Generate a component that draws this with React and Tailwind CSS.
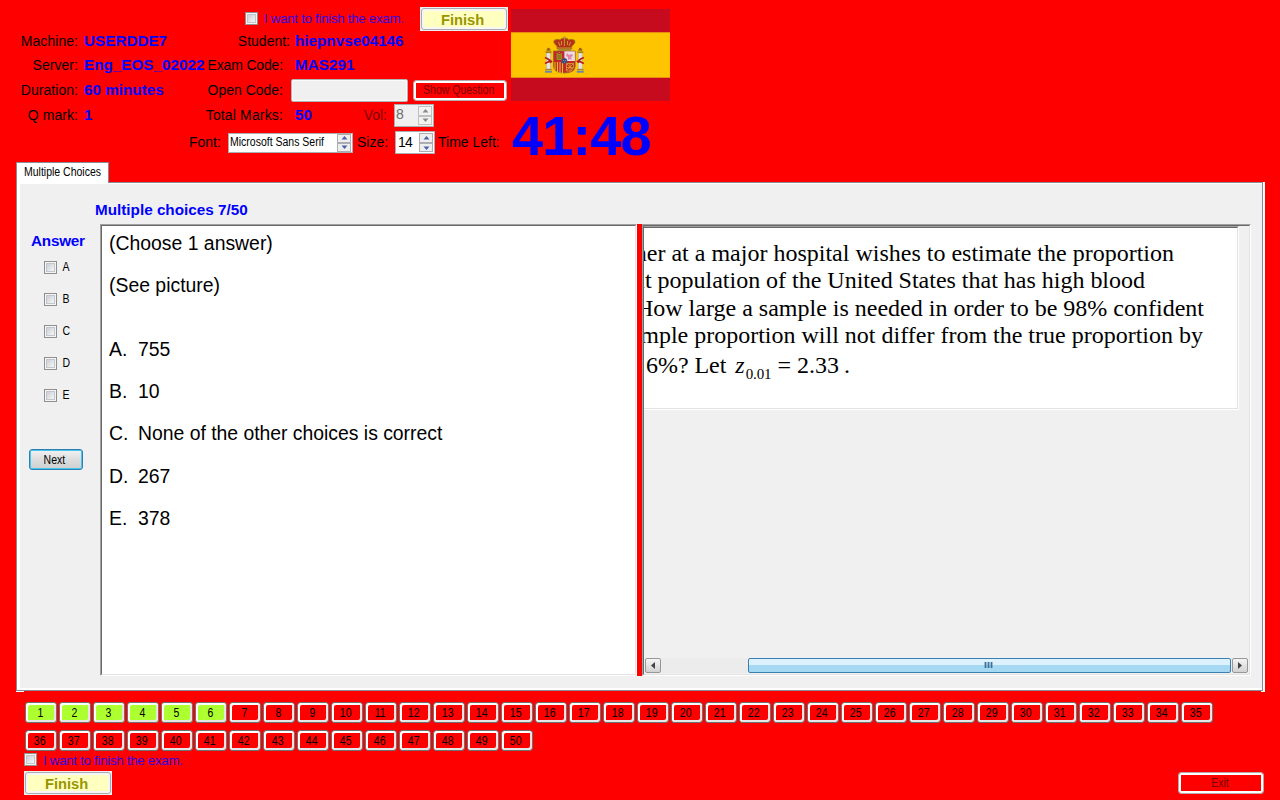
import React from "react";

const small = "inline-block whitespace-nowrap text-[12px] leading-[14px] scale-x-[.875]";
const wide = "inline-block origin-left whitespace-nowrap text-[14px] leading-4 font-bold text-[#0000ff] scale-x-[1.09]";

function CheckBox() {
  return (
    <span className="block h-[13px] w-[13px] shrink-0 border border-[#8e8f8f] bg-[#f4f4f4] p-px">
      <span className="block h-full w-full border border-[#c3c6cb] bg-linear-to-br from-[#cbcfd5] to-[#f6f6f6]" />
    </span>
  );
}

function FinishCheck() {
  return (
    <label className="flex items-center">
      <span className="pb-px"><CheckBox /></span>
      <span className="ml-[6px] whitespace-nowrap text-[13.33px] leading-4 tracking-[-0.3px] text-[#3000e0]">
        I want to finish the exam.
      </span>
    </label>
  );
}

function FinishButton() {
  return (
    <button className="h-6 w-[88px] shrink-0 bg-[#f0f0f0] p-px">
      <span className="flex h-full w-full items-center justify-center rounded-[3px] border border-[#a9acb0] bg-[#ffffc0] pr-[3px] shadow-[inset_0_0_0_2px_#f6f6f6]">
        <span className="inline-block scale-x-[1.05] pt-[2px] text-[14px] leading-4 font-bold text-[#989600]">Finish</span>
      </span>
    </button>
  );
}

function Spinner({ disabled, short }) {
  const fill = disabled ? "#8a8a8a" : "#4a62a8";
  const box = disabled
    ? "flex w-[14px] items-center justify-center border border-[#c0c0c0] bg-[#f2f2f2] "
    : "flex w-[14px] items-center justify-center border border-[#abadb3] bg-[#eeeeee] ";
  return (
    <span className="flex shrink-0 flex-col">
      <span className={box + (short ? "h-[9px]" : "h-[10px]")}>
        <svg width="7" height="4" viewBox="0 0 7 4"><path d="M3.5 0 6.5 3.5h-6z" fill={fill} /></svg>
      </span>
      <span className={box + "h-[9px]"}>
        <svg width="7" height="4" viewBox="0 0 7 4"><path d="M.5.5h6L3.5 4z" fill={fill} /></svg>
      </span>
    </span>
  );
}

function Flag() {
  return (
    <svg className="block" width="159" height="92" viewBox="0 0 159 92">
      <rect width="159" height="92" fill="#c60b1e" />
      <rect y="23" width="159" height="46" fill="#ffc400" />
      <path d="M0 23.5h159M0 68.5h159" stroke="#e88b10" />
      {/* crown */}
      <path d="M43 34q-1-3 2-3.5 3-.5 4 .5 1-2 4.400-2 3.400 0 4.400 2 1-1 4-.5 3 .5 2 3.500l-3 3.500v2.500H46v-2.500z" fill="#b8301c" stroke="#a47b10" strokeWidth=".9" />
      <path d="M53.4 27v10M52 28.500h3M47.500 33l1.500 4M59.500 33l-1.500 4M46 39h15M50.500 32v4M56.500 32v4" stroke="#c0992c" strokeWidth="1" fill="none" />
      <path d="M47 41h13" stroke="#7b6b4c" />
      {/* pillars */}
      {[37.5, 69.3].map((x) => (
        <g key={x}>
          <path d={`M${x - 2} 44h4v16h-4z`} fill="#e4e4e4" stroke="#aaa" strokeWidth=".5" />
          <path d={`M${x - 3} 43.2h6M${x - 2} 41h4`} stroke="#8f6d1d" strokeWidth="1.3" />
          <circle cx={x} cy="40" r="1.3" fill="#9a5b1a" />
          <path d={`M${x - 3.3} 60.5h6.6`} stroke="#a8843a" strokeWidth="1.2" />
          <path d={`M${x - 3.5} 62.7h7`} stroke="#6e88a8" strokeWidth="2" />
        </g>
      ))}
      <path d="M34 48.500l3 1.500 4 3M34 54.500l4-2 2 1M72.800 48.500l-3 1.500-4 3M72.800 54.500l-4-2-2 1" stroke="#b51f20" strokeWidth="1.700" fill="none" />
      {/* quartered shield */}
      <path d="M42.5 42h21.7v15q0 7-10.8 7t-10.9-7z" fill="#c1272d" stroke="#8a6a36" strokeWidth=".7" />
      <path d="M53.4 42.3h10.5V52H53.4z" fill="#eddde3" />
      <path d="M46 45.5h4.5v5H46zM45.3 44.5h1.5M47.5 43.7h1.5M50 44.5h1.2" fill="#8d7725" stroke="#a38b20" strokeWidth="1" />
      <path d="M56 44l2 2 3-1 1 2-2 1 1 3-2-1-2 1v-3l-2-1z" fill="#d987a7" />
      <path d="M44 53v8M46.5 53v10M49 53v11M51.5 53v11" stroke="#e8bd22" strokeWidth="1.1" />
      <path d="M55.5 54.5h7v4l-2.5 3.5h-4.5zM55.5 54.5l6 6M62.5 54.5l-7 7M59 54.5v8M55.5 58.5h7" stroke="#d9a329" strokeWidth=".8" fill="none" />
      <circle cx="53.4" cy="52" r="2.7" fill="#234f9b" stroke="#8a4552" strokeWidth=".6" />
      <path d="M52.3 51.5h.8M54 51.5h.8M53 53.3h.8" stroke="#d4b84a" strokeWidth=".8" />
    </svg>
  );
}

function InfoRow({ height, label, value, label2, value2, pad, children }) {
  return (
    <div className={"flex items-center " + height}>
      <span className="w-[78px] shrink-0 whitespace-nowrap pb-px text-right text-[14px] leading-4 tracking-[.05px]">{label}</span>
      <span className="ml-[6px] w-[122px] shrink-0 pb-px">{value && <span className={wide}>{value}</span>}</span>
      <span className={"flex w-[84px] shrink-0 justify-end whitespace-nowrap pb-px text-[14px] leading-4 " + pad}>{label2}</span>
      {value2 && <span className="ml-[5px] w-[62px] shrink-0 pb-px"><span className={wide}>{value2}</span></span>}
      {children}
    </div>
  );
}

function Header() {
  return (
    <header className="flex h-[162px] pt-[7px]">
      <div className="w-[511px] shrink-0">
        <div className="flex h-6 items-center justify-between pl-[245px] pr-[3px]">
          <FinishCheck />
          <FinishButton />
        </div>
        <InfoRow height="h-5" label="Machine:" value="USERDDE7" label2="Student:" value2="hiepnvse04146" pad="" />
        <InfoRow height="h-[28px]" label="Server:" value="Eng_EOS_02022" label2="Exam Code:" value2="MAS291" pad="pr-[7px] tracking-[-.15px]" />
        <InfoRow height="h-[22px]" label="Duration:" value="60 minutes" label2="Open Code:" pad="pr-[7px]">
          <span className="ml-px h-[23px] w-[117px] shrink-0 rounded-[2px] border border-[#b4b4b4] bg-[#f0f0f0] shadow-[inset_0_0_0_1px_#fafafa]" />
          <button className="ml-[5px] flex h-[21px] w-[94px] shrink-0 items-center justify-center rounded-[3px] border border-[#b8a8a8] bg-[#ff0000] pr-[2px] shadow-[inset_0_0_0_2px_#fff]">
            <span className={small + " text-[#780000]"}>Show Question</span>
          </button>
        </InfoRow>
        <InfoRow height="h-[28px]" label="Q mark:" value="1" label2="Total Marks:" value2="50" pad="pr-[7px] tracking-[.15px]">
          <span className="w-[30px] shrink-0 pb-px text-right text-[14px] leading-4 text-[#7c0000]">Vol:</span>
          <span className="ml-[7px] flex h-[23px] w-10 shrink-0 items-center justify-between border border-[#abadb3] bg-[#f0f0f0] pl-px pr-px text-[#6d6d6d]">
            <span className="pb-[2px] text-[14px] leading-4">8</span>
            <Spinner disabled />
          </span>
        </InfoRow>
        <div className="flex h-[27px] items-center pl-[189px] text-[14px] leading-4">
          <span className="w-[39px] shrink-0 pb-px">Font:</span>
          <span className="flex h-5 w-[125px] shrink-0 items-center justify-between border border-[#abadb3] bg-white pl-px pr-px">
            <span className={small + " origin-left pb-[2px]"}>Microsoft Sans Serif</span>
            <Spinner short />
          </span>
          <span className="ml-1 w-[38px] shrink-0 whitespace-nowrap pb-px">Size:</span>
          <span className="flex h-[23px] w-10 shrink-0 items-center justify-between border border-[#abadb3] bg-white pl-[2px] pr-px">
            <span className="pb-[2px] text-[14px] leading-4 tracking-[-.8px]">14</span>
            <Spinner />
          </span>
          <span className="ml-[3px] whitespace-nowrap pb-px">Time Left:</span>
        </div>
      </div>
      <div className="pt-[2px]">
        <Flag />
        <div className="whitespace-nowrap pt-[7px] pl-px text-[56px] leading-[56px] font-bold tracking-[-.9px] text-[#0000ff]">41:48</div>
      </div>
    </header>
  );
}

const answers = [
  ["A.", "755", "mt-[42px]"],
  ["B.", "10", "mt-[20px]"],
  ["C.", "None of the other choices is correct", "mt-[20px]"],
  ["D.", "267", "mt-[21px]"],
  ["E.", "378", "mt-[20px]"],
];

const scrollButton = "flex h-[15px] w-4 shrink-0 items-center justify-center rounded-[2px] border border-[#979797] bg-linear-to-b from-[#f5f5f5] to-[#d2d2d4]";
const line = "flex justify-end overflow-hidden whitespace-nowrap";

function Picture() {
  return (
    <div className="h-[184px] w-[595px] border-t border-r border-b border-t-[#a0a0a0] border-r-white border-b-white">
      <div className="h-[182px] w-[594px] overflow-hidden border-t border-r border-b border-t-[#696969] border-r-[#e3e3e3] border-b-[#e3e3e3] bg-white pt-[12px] font-['Liberation_Serif',serif] text-[24px] leading-[27px]">
        <div className={line + " pr-[63px]"}>her at a major hospital wishes to estimate the proportion</div>
        <div className={line + " pr-[92px] tracking-[-.01px]"}>lt population of the United States that has high blood</div>
        <div className={line + " mt-px pr-[33px]"}>How large a sample is needed in order to be 98% confident</div>
        <div className={line + " pr-[34px]"}>ample proportion will not differ from the true proportion by</div>
        <div className="flex h-[32px] items-baseline whitespace-nowrap pl-[2px] pt-[3px] tracking-[-.04px]">
          <span>6%? Let</span>
          <span className="ml-[9px] italic">z</span>
          <span className="relative top-[6px] ml-px text-[15px] leading-none tracking-[-.1px]">0.01</span>
          <span className="ml-[6px]">=</span>
          <span className="ml-[6px]">2.33</span>
          <span className="ml-[5px]">.</span>
        </div>
      </div>
    </div>
  );
}

function ExamPanel() {
  return (
    <section className="ml-4 w-[1249px]">
      <div className="relative z-10 flex h-[21px] w-[93px] items-center border border-b-0 border-[#898c95] bg-white pl-[7px]">
        <span className={small + " origin-left pb-[2px]"}>Multiple Choices</span>
      </div>
      <div className="-mt-px h-[509px] border-r-2 border-white">
        <div className="h-full border border-[#898c95] bg-white pt-px pb-[2px] pl-[3px]">
          <div className="flex h-full bg-[#f0f0f0]">
            <div className="flex w-[80px] shrink-0 flex-col pt-[49px]">
              <span className={wide + " ml-[11px] w-[48px] tracking-[-.2px]"}>Answer</span>
              <div className="mt-[11px] flex flex-col gap-[18px] pl-6">
                {["A", "B", "C", "D", "E"].map((k) => (
                  <label key={k} className="flex h-[14px] items-center">
                    <CheckBox />
                    <span className={small + " ml-[5px]"}>{k}</span>
                  </label>
                ))}
              </div>
              <button className="mt-[47px] ml-[9px] flex h-[21px] w-[54px] shrink-0 items-center justify-center rounded-[3px] border border-[#2c7fb0] bg-linear-to-b from-[#f2f2f2] from-0% via-[#dddddd] via-50% to-[#cfcfcf] pr-1 shadow-[inset_0_0_0_1px_#48c5ee]">
                <span className={small}>Next</span>
              </button>
            </div>
            <div className="flex flex-col">
              <div className="flex h-10 items-center pt-[11px]">
                <span className={wide + " -ml-[5px]"}>Multiple choices 7/50</span>
              </div>
              <div className="flex h-[452px]">
                <div className="h-full w-[537px] border border-t-[#a0a0a0] border-l-[#a0a0a0] border-r-white border-b-white">
                  <div className="h-full border border-t-[#696969] border-l-[#696969] border-r-[#e3e3e3] border-b-[#e3e3e3] bg-white pl-[7px] pt-[6px] text-[19.4px] leading-[22px]">
                    <div>(Choose 1 answer)</div>
                    <div className="mt-[20px]">(See picture)</div>
                    {answers.map(([k, t, gap]) => (
                      <div key={k} className={"flex " + gap}>
                        <span className="w-[29px]">{k}</span>
                        <span className="tracking-[-.02px]">{t}</span>
                      </div>
                    ))}
                  </div>
                </div>
                <div className="w-[5px] bg-[#ff0000]" />
                <div className="h-full w-[609px] border border-t-[#a0a0a0] border-l-[#a0a0a0] border-r-white border-b-white">
                  <div className="flex h-full flex-col justify-between border border-t-[#696969] border-l-[#696969] border-r-[#e3e3e3] border-b-[#e3e3e3]">
                    <Picture />
                    <div className="mb-px ml-px flex h-[15px] w-[603px] bg-[#ececec]">
                      <div className={scrollButton}>
                        <svg width="4" height="7" viewBox="0 0 4 7"><path d="M4 0v7L0 3.5z" fill="#444" /></svg>
                      </div>
                      <div className="ml-[87px] flex h-[15px] w-[483px] items-center justify-center rounded-[2px] border border-[#3c7fb1] bg-linear-to-b from-[#dcf1fc] from-45% to-[#a5d8f3] to-50% pr-[2px]">
                        <svg width="9" height="7" viewBox="0 0 9 7"><path d="M1.500 0v6M4.500 0v6M7.500 0v6" stroke="#3a7299" strokeWidth="1.8" /></svg>
                      </div>
                      <div className={scrollButton + " ml-px"}>
                        <svg width="4" height="7" viewBox="0 0 4 7"><path d="M0 0v7l4-3.5z" fill="#444" /></svg>
                      </div>
                    </div>
                  </div>
                </div>
              </div>
            </div>
          </div>
        </div>
      </div>
      <div className="flex h-px justify-between">
        <div className="w-2 bg-white" />
        <div className="w-1 bg-white" />
      </div>
    </section>
  );
}

function NumberButton({ n }) {
  return (
    <button className={"flex h-[21px] w-8 shrink-0 items-center justify-center rounded-[3px] border border-[#707070] pr-[2px] shadow-[inset_2px_2px_0_#fff,inset_-2px_-2px_0_#e6e6e6] " + (n <= 6 ? "bg-[#adff2f]" : "bg-[#ff0000]")}>
      <span className={small}>{n}</span>
    </button>
  );
}

export default function App() {
  const numbers = Array.from({ length: 50 }, (_, i) => i + 1);
  return (
    <main className="h-[800px] w-[1280px] overflow-hidden bg-[#ff0000] font-['Liberation_Sans',Arial,sans-serif] text-black">
      <Header />
      <ExamPanel />
      <nav className="mt-[10px] ml-[25px] flex w-[1190px] flex-wrap gap-x-[2px] gap-y-[7px]">
        {numbers.map((n) => <NumberButton key={n} n={n} />)}
      </nav>
      <footer className="flex items-end justify-between pl-6 pr-4">
        <div className="pt-px">
          <div className="flex items-start">
            <span className="pt-px"><CheckBox /></span>
            <span className="ml-[6px] whitespace-nowrap pt-px text-[13.33px] leading-4 tracking-[-0.3px] text-[#3000e0]">
              I want to finish the exam.
            </span>
          </div>
          <div className="mt-[2px] flex"><FinishButton /></div>
        </div>
        <button className="mb-px flex h-[22px] w-[86px] items-center justify-center rounded-[3px] border border-[#b8a8a8] bg-[#ff0000] pr-px shadow-[inset_0_0_0_2px_#fff]">
          <span className={small + " text-[#780000]"}>Exit</span>
        </button>
      </footer>
    </main>
  );
}
